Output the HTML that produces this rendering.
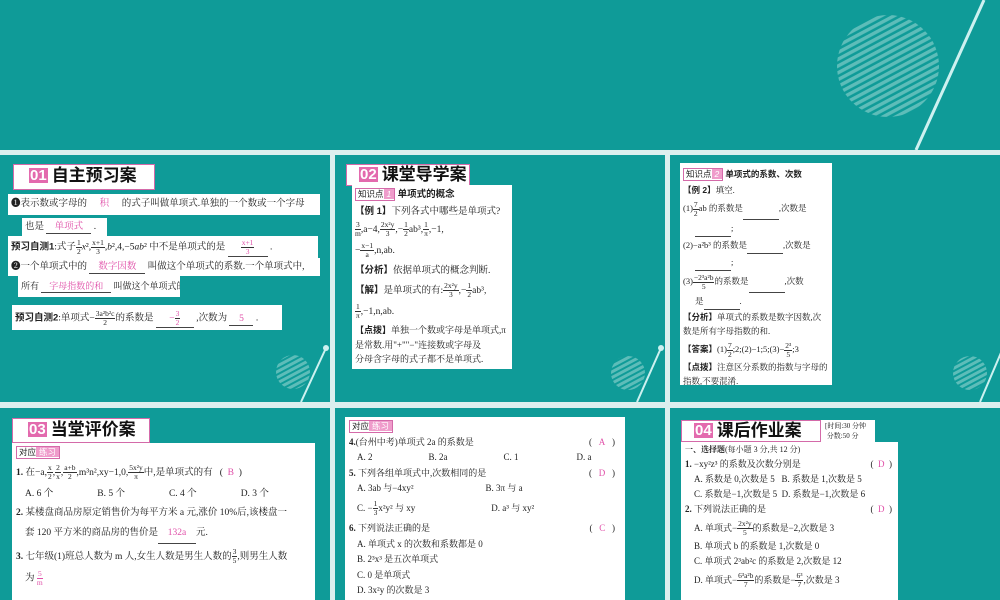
<!DOCTYPE html>
<html><head><meta charset="utf-8"><style>
*{margin:0;padding:0;box-sizing:border-box}
body{width:1000px;height:600px;overflow:hidden;background:#dcefee;position:relative;font-family:"Liberation Serif","Noto Serif CJK SC",serif;color:#222}
.p{position:absolute;background:#0f9b98;overflow:hidden}
.w{position:absolute;background:#fff;overflow:hidden;white-space:nowrap}
.t{font-size:9.5px;line-height:11px}
.pk{color:#e04fa8}
.u{display:inline-block;border-bottom:0.8px solid #444;text-align:center}
.f{display:inline-flex;flex-direction:column;vertical-align:middle;text-align:center;font-size:7.5px;line-height:8px}
.f i{font-style:normal;border-bottom:0.7px solid #333;padding:0 1px}
.f b{font-weight:normal}
.hd{position:absolute;background:#fff;border:1px solid #d46aa9;font-family:"Liberation Sans","Noto Sans CJK SC",sans-serif;font-weight:bold;font-size:17px;line-height:22px;white-space:nowrap;color:#111}
.num{display:inline-block;background:#e36aae;color:#fff;font-size:15px;line-height:15px;padding:0 1px;margin:0 4px 0 15px;vertical-align:1px}
.tag{display:inline-block;border:1px solid #d46aa9;font-family:"Liberation Sans","Noto Sans CJK SC",sans-serif;font-size:8.5px;line-height:11px;padding:0 2px}
.tag s{text-decoration:none;background:#ef9ccb;color:#fff;padding:0 3px;margin-right:-2px}
.bk{font-weight:bold;font-family:"Liberation Sans","Noto Sans CJK SC",sans-serif}
</style></head><body>
<div class="p" style="left:0;top:0;width:1000px;height:150px">
<svg width="1000" height="150" style="position:absolute;left:0;top:0">
<defs><pattern id="st" width="6" height="6" patternUnits="userSpaceOnUse" patternTransform="rotate(-28)"><rect width="6" height="3.4" fill="#5dbdb9"/></pattern></defs>
<circle cx="888" cy="66" r="51" fill="url(#st)"/>
<line x1="984" y1="0" x2="916" y2="150" stroke="#cdf1f0" stroke-width="3"/>
</svg></div>

<div class="p" style="left:0;top:155px;width:330px;height:247px">
<svg width="330" height="247" style="position:absolute;left:0;top:0"><defs><pattern id="s1" width="5" height="5" patternUnits="userSpaceOnUse" patternTransform="rotate(-28)"><rect width="5" height="3" fill="#5dbdb9"/></pattern></defs><circle cx="293" cy="217" r="17" fill="url(#s1)"/><line x1="326" y1="193" x2="301" y2="247" stroke="#cdf1f0" stroke-width="2"/><circle cx="326" cy="193" r="3" fill="#cdf1f0"/></svg>
</div>
<div class="hd" style="left:13px;top:164px;width:142px;height:26px"><span class="num">01</span>自主预习案</div>
<div class="w t" style="left:8px;top:194px;width:312px;height:21px;padding:5px 0 0 3px">❶表示数或字母的 <span class="pk" style="display:inline-block;width:30px;text-align:center">积</span> 的式子叫做单项式.单独的一个数或一个字母</div>
<div class="w t" style="left:22px;top:218px;width:85px;height:18px;padding:4px 0 0 3px">也是 <span class="u pk" style="width:45px">单项式</span> .</div>
<div class="w t" style="left:8px;top:236px;width:310px;height:22px;padding:3px 0 0 3px"><span class="bk">预习自测1</span>:式子<span class="f"><i>1</i><b>2</b></span><i>x</i>²,<span class="f"><i>x+1</i><b>3</b></span>,<i>b</i>²,4,−5<i>ab</i>² 中不是单项式的是 <span class="u pk" style="width:40px"><span class="f"><i>x+1</i><b>3</b></span></span> .</div>
<div class="w t" style="left:8px;top:258px;width:312px;height:18px;padding:4px 0 0 3px">❷一个单项式中的 <span class="u pk" style="width:56px">数字因数</span> 叫做这个单项式的系数.一个单项式中,</div>
<div class="w t" style="left:18px;top:276px;width:162px;height:21px;padding:5px 0 0 3px;font-size:9px">所有 <span class="u pk" style="width:70px">字母指数的和</span> 叫做这个单项式的次数.</div>
<div class="w t" style="left:12px;top:305px;width:270px;height:25px;padding:5px 0 0 3px"><span class="bk">预习自测2</span>:单项式−<span class="f"><i>3a²b²c</i><b>2</b></span>的系数是 <span class="u pk" style="width:38px">−<span class="f"><i>3</i><b>2</b></span></span> ,次数为 <span class="u pk" style="width:24px">5</span> .</div>

<div class="p" style="left:335px;top:155px;width:330px;height:247px">
<svg width="330" height="247" style="position:absolute;left:0;top:0"><defs><pattern id="s2" width="5" height="5" patternUnits="userSpaceOnUse" patternTransform="rotate(-28)"><rect width="5" height="3" fill="#5dbdb9"/></pattern></defs><circle cx="293" cy="218" r="17" fill="url(#s2)"/><line x1="326" y1="193" x2="302" y2="247" stroke="#cdf1f0" stroke-width="2"/><circle cx="326" cy="193" r="3" fill="#cdf1f0"/></svg>
</div>
<div class="hd" style="left:346px;top:164px;width:124px;height:22px;line-height:20px"><span class="num" style="margin-left:12px">02</span>课堂导学案</div>
<div class="w t" style="left:352px;top:185px;width:160px;height:184px;padding:2px 3px;line-height:15.5px">
<div><span class="tag">知识点<s><i>1</i></s></span> <span class="bk">单项式的概念</span></div>
<div><span class="bk">【例 1】</span>下列各式中哪些是单项式?</div>
<div style="line-height:21px"><span class="f"><i>3</i><b>m</b></span>,a−4,<span class="f"><i>2x²y</i><b>3</b></span>,−<span class="f"><i>1</i><b>2</b></span>ab³,<span class="f"><i>1</i><b>π</b></span>,−1,</div>
<div style="line-height:21px">−<span class="f"><i>x−1</i><b>a</b></span>,n,ab.</div>
<div style="line-height:17px"><span class="bk">【分析】</span>依据单项式的概念判断.</div>
<div style="line-height:21px"><span class="bk">【解】</span>是单项式的有:<span class="f"><i>2x²y</i><b>3</b></span>,−<span class="f"><i>1</i><b>2</b></span>ab³,</div>
<div style="line-height:21px"><span class="f"><i>1</i><b>π</b></span>,−1,n,ab.</div>
<div style="line-height:14.5px;font-size:9px"><span class="bk">【点拨】</span>单独一个数或字母是单项式,π<br>是常数.用"+""−"连接数或字母及<br>分母含字母的式子都不是单项式.</div>
</div>

<div class="p" style="left:670px;top:155px;width:330px;height:247px">
<svg width="330" height="247" style="position:absolute;left:0;top:0"><defs><pattern id="s3" width="5" height="5" patternUnits="userSpaceOnUse" patternTransform="rotate(-28)"><rect width="5" height="3" fill="#5dbdb9"/></pattern></defs><circle cx="300" cy="218" r="17" fill="url(#s3)"/><line x1="333" y1="193" x2="310" y2="247" stroke="#cdf1f0" stroke-width="2"/><circle cx="333" cy="193" r="3" fill="#cdf1f0"/></svg>
</div>
<div class="w t" style="left:680px;top:163px;width:152px;height:222px;padding:3px 3px;line-height:16px;font-size:8.5px">
<div><span class="tag">知识点<s><i>2</i></s></span> <span class="bk">单项式的系数、次数</span></div>
<div><span class="bk">【例 2】</span>填空.</div>
<div style="line-height:21px">(1)<span class="f"><i>7</i><b>2</b></span>ab 的系数是<span class="u" style="width:36px">&nbsp;</span>,次数是</div>
<div style="padding-left:12px"><span class="u" style="width:36px">&nbsp;</span>;</div>
<div>(2)−a²b³ 的系数是<span class="u" style="width:36px">&nbsp;</span>,次数是</div>
<div style="padding-left:12px"><span class="u" style="width:36px">&nbsp;</span>;</div>
<div style="line-height:21px">(3)<span class="f"><i>−2³a²b</i><b>5</b></span>的系数是<span class="u" style="width:36px">&nbsp;</span>,次数</div>
<div style="padding-left:12px">是<span class="u" style="width:36px">&nbsp;</span>.</div>
<div style="line-height:14px"><span class="bk">【分析】</span>单项式的系数是数字因数,次<br>数是所有字母指数的和.</div>
<div style="line-height:22px"><span class="bk">【答案】</span>(1)<span class="f"><i>7</i><b>2</b></span>;2;(2)−1;5;(3)−<span class="f"><i>2³</i><b>5</b></span>;3</div>
<div style="line-height:14px"><span class="bk">【点拨】</span>注意区分系数的指数与字母的<br>指数,不要混淆.</div>
</div>

<div class="p" style="left:0;top:408px;width:330px;height:192px"></div>
<div class="hd" style="left:12px;top:418px;width:138px;height:25px"><span class="num">03</span>当堂评价案</div>
<div class="w t" style="left:12px;top:443px;width:303px;height:157px;padding:3px 4px;line-height:15px">
<div><span class="tag">对应<s>练习</s></span></div>
<div style="line-height:24px"><b>1.</b> 在−a,<span class="f"><i>x</i><b>2</b></span>,<span class="f"><i>2</i><b>x</b></span>,<span class="f"><i>a+b</i><b>2</b></span>,m³n²,xy−1,0,<span class="f"><i>5x²y</i><b>π</b></span>中,是单项式的有 &nbsp;&nbsp;( &nbsp;<span class="pk">B</span>&nbsp; )</div>
<div style="line-height:18px;padding-left:9px">A. 6 个<span style="display:inline-block;width:44px"></span>B. 5 个<span style="display:inline-block;width:44px"></span>C. 4 个<span style="display:inline-block;width:44px"></span>D. 3 个</div>
<div style="line-height:20px"><b>2.</b> 某楼盘商品房原定销售价为每平方米 a 元,涨价 10%后,该楼盘一</div>
<div style="line-height:20px;padding-left:9px">套 120 平方米的商品房的售价是<span class="u pk" style="width:38px">132a</span>元.</div>
<div style="line-height:26px"><b>3.</b> 七年级(1)班总人数为 m 人,女生人数是男生人数的<span class="f"><i>3</i><b>5</b></span>,则男生人数</div>
<div style="padding-left:9px">为 <span class="pk f"><i style="border-color:#e04fa8">5</i><b>m</b></span></div>
</div>

<div class="p" style="left:335px;top:408px;width:330px;height:192px"></div>
<div class="w t" style="left:345px;top:417px;width:280px;height:183px;padding:2px 4px;line-height:15.5px;font-size:9px">
<div><span class="tag">对应<s>练习</s></span></div>
<div><b>4.</b>(台州中考)单项式 2a 的系数是<span style="float:right;margin-right:6px">( &nbsp;&nbsp;<span class="pk">A</span>&nbsp;&nbsp; )</span></div>
<div style="padding-left:8px">A. 2<span style="display:inline-block;width:56px"></span>B. 2a<span style="display:inline-block;width:56px"></span>C. 1<span style="display:inline-block;width:58px"></span>D. a</div>
<div><b>5.</b> 下列各组单项式中,次数相同的是<span style="float:right;margin-right:6px">( &nbsp;&nbsp;<span class="pk">D</span>&nbsp;&nbsp; )</span></div>
<div style="padding-left:8px">A. 3ab 与−4xy²<span style="display:inline-block;width:72px"></span>B. 3π 与 a</div>
<div style="padding-left:8px;line-height:22px">C. −<span class="f"><i>1</i><b>3</b></span>x²y² 与 xy<span style="display:inline-block;width:76px"></span>D. a³ 与 xy²</div>
<div style="line-height:18px"><b>6.</b> 下列说法正确的是<span style="float:right;margin-right:6px">( &nbsp;&nbsp;<span class="pk">C</span>&nbsp;&nbsp; )</span></div>
<div style="padding-left:8px">A. 单项式 x 的次数和系数都是 0</div>
<div style="padding-left:8px">B. 2³x³ 是五次单项式</div>
<div style="padding-left:8px">C. 0 是单项式</div>
<div style="padding-left:8px">D. 3x²y 的次数是 3</div>
</div>

<div class="p" style="left:670px;top:408px;width:330px;height:192px"></div>
<div class="hd" style="left:681px;top:420px;width:140px;height:22px;line-height:20px"><span class="num" style="margin-left:12px">04</span>课后作业案</div>
<div class="w" style="left:821px;top:420px;width:54px;height:22px;font-size:7px;line-height:10px;padding:1px 0 0 4px">[时间:30 分钟<br>&nbsp;分数:50 分</div>
<div class="w t" style="left:681px;top:442px;width:217px;height:158px;padding:0 4px;line-height:15px;font-size:9px">
<div style="font-size:8px"><b>一、选择题</b>(每小题 3 分,共 12 分)</div>
<div><b>1.</b> −xy²z³ 的系数及次数分别是<span style="float:right;margin-right:2px">( &nbsp;<span class="pk">D</span>&nbsp; )</span></div>
<div style="padding-left:9px">A. 系数是 0,次数是 5 &nbsp;&nbsp;B. 系数是 1,次数是 5</div>
<div style="padding-left:9px">C. 系数是−1,次数是 5 &nbsp;D. 系数是−1,次数是 6</div>
<div><b>2.</b> 下列说法正确的是<span style="float:right;margin-right:2px">( &nbsp;<span class="pk">D</span>&nbsp; )</span></div>
<div style="padding-left:9px;line-height:22px">A. 单项式−<span class="f"><i>2x²y</i><b>5</b></span>的系数是−2,次数是 3</div>
<div style="padding-left:9px">B. 单项式 b 的系数是 1,次数是 0</div>
<div style="padding-left:9px">C. 单项式 2³ab²c 的系数是 2,次数是 12</div>
<div style="padding-left:9px;line-height:22px">D. 单项式−<span class="f"><i>6³a²b</i><b>7</b></span>的系数是−<span class="f"><i>6³</i><b>7</b></span>,次数是 3</div>
</div>
</body></html>
